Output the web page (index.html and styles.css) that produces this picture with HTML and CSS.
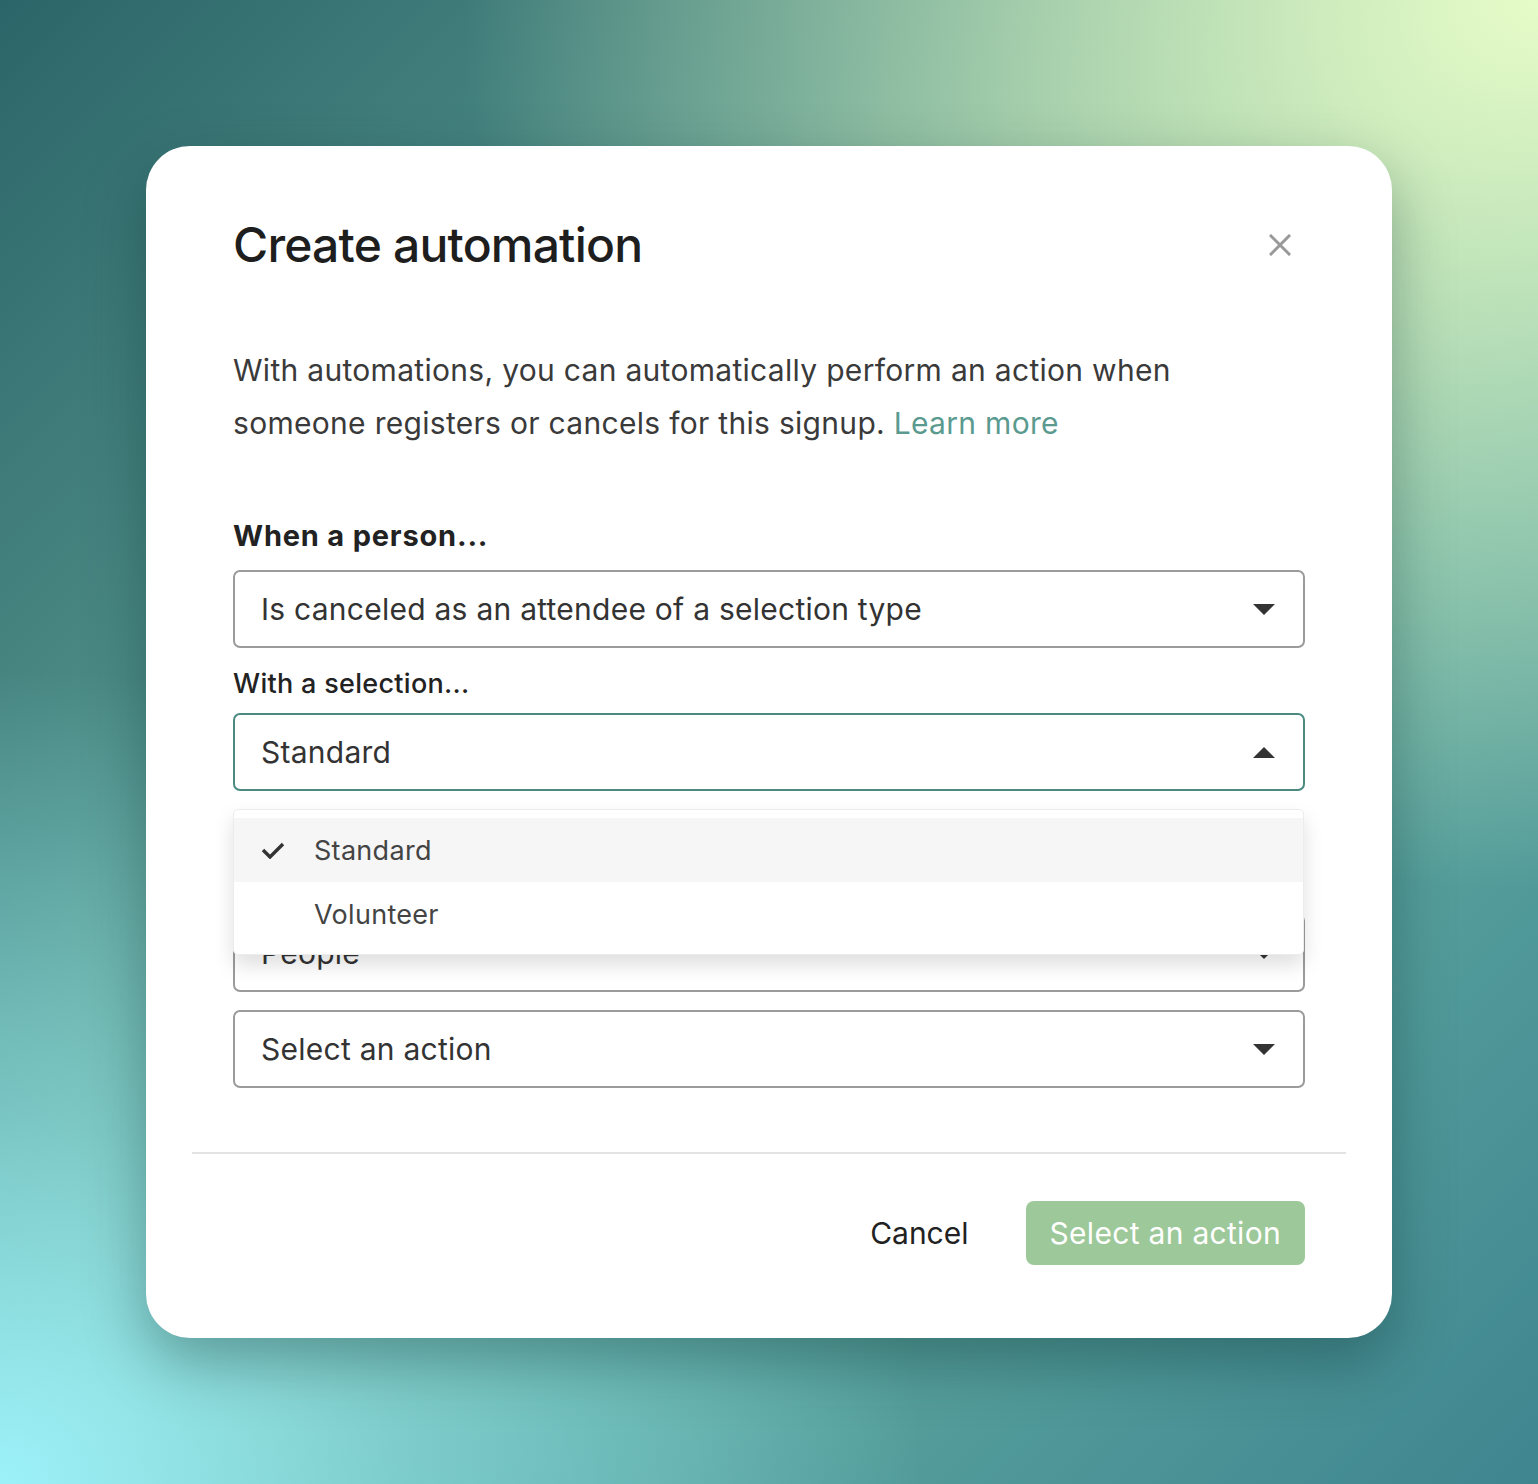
FILE: index.html
```html
<!DOCTYPE html>
<html lang="en">
<head>
  <meta charset="UTF-8" />
  <title>Create automation</title>
  <link rel="stylesheet" href="styles.css">
</head>
<body>

  <!-- Modal -->
  <div class="modal">
    <div class="modal-head">
      <h2 class="modal-title">Create automation</h2>
      <button class="close-btn" aria-label="Close">
        <svg width="22" height="22" viewBox="0 0 22 22">
          <path d="M2 2 L20 20 M20 2 L2 20" stroke="#999" stroke-width="3" stroke-linecap="square" fill="none"/>
        </svg>
      </button>
    </div>

    <p class="intro">
      With automations, you can automatically perform an action when
      someone registers or cancels for this signup. <a href="#" class="link">Learn more</a>
    </p>

    <div class="field field-first">
      <label class="label label-strong">When a person...</label>
      <div class="select">
        <span>Is canceled as an attendee of a selection type</span>
        <span class="caret"></span>
      </div>
    </div>

    <div class="field field-open">
      <label class="label">With a selection...</label>
      <div class="select select-active">
        <span>Standard</span>
        <span class="caret caret-up"></span>
      </div>

      <!-- Menu desplegable -->
      <ul class="menu">
        <li class="menu-item selected">
          <svg class="check" width="24" height="18" viewBox="0 0 24 18">
            <path d="M2 9 L9 16 L22 3" stroke="#333" stroke-width="3.4" fill="none"/>
          </svg>
          Standard
        </li>
        <li class="menu-item">Volunteer</li>
      </ul>
    </div>

    <div class="field field-then">
      <label class="label">Then...</label>
      <div class="select">
        <span>People</span>
        <span class="caret"></span>
      </div>
    </div>

    <div class="field">
      <div class="select">
        <span>Select an action</span>
        <span class="caret"></span>
      </div>
    </div>

    <hr class="divider">

    <div class="modal-foot">
      <button class="btn-cancel">Cancel</button>
      <button class="btn-primary">Select an action</button>
    </div>
  </div>

</body>
</html>
```

FILE: styles.css
```css
body {
  font-family: Inter, "Noto Sans", sans-serif;
  margin: 0;
  min-height: 100vh;
  display: flex;
  justify-content: center;
  align-items: center;
  background:
    radial-gradient(ellipse 70% 60% at 100% 0%, #e6fcc8 0%, rgba(220, 245, 195, 0.6) 45%, rgba(200, 235, 190, 0) 100%),
    radial-gradient(ellipse 60% 55% at 0% 100%, #9cf1f9 0%, rgba(140, 225, 232, 0.6) 45%, rgba(120, 210, 215, 0) 100%),
    linear-gradient(135deg, #2c6569 0%, #4f8f88 30%, #7ab598 50%, #5fa9a0 65%, #3e8590 100%);
}
.modal {
  background: white;
  width: 1246px;
  box-sizing: border-box;
  padding: 70px 87px 73px 87px;
  border-radius: 44px;
  box-shadow: 0 24px 60px rgba(0, 40, 40, 0.35);
  color: #222;
}
.modal-head {
  display: flex;
  justify-content: space-between;
  align-items: center;
}
.modal-title {
  margin: 0;
  font-size: 48px;
  line-height: 58px;
  font-weight: 500;
  color: #1e1e1e;
  letter-spacing: -0.8px;
}
.close-btn {
  background: none;
  border: none;
  padding: 0;
  margin-right: 14px;
  width: 22px;
  height: 22px;
  display: flex;
}
.intro {
  margin: 70px 0 0;
  max-width: 980px;
  font-size: 30px;
  line-height: 53px;
  color: #3a3a3a;
  letter-spacing: 0.3px;
}
.link {
  color: #5a9a8f;
  text-decoration: none;
}
.field {
  margin-top: 18px;
}
.field-first {
  margin-top: 66px;
}
.label {
  display: block;
  font-size: 27px;
  line-height: 36px;
  font-weight: 500;
  color: #222;
  margin-bottom: 11px;
  letter-spacing: 0.3px;
}
.label-strong {
  font-size: 29px;
  line-height: 40px;
  font-weight: 700;
  margin-bottom: 14px;
  letter-spacing: 0.8px;
}
.select {
  height: 78px;
  box-sizing: border-box;
  border: 2px solid #9b9b9b;
  border-radius: 7px;
  padding: 0 28px 0 26px;
  display: flex;
  align-items: center;
  justify-content: space-between;
  font-size: 30px;
  color: #333;
  letter-spacing: 0.25px;
}
.select-active {
  border-color: #4a8a80;
}
.caret {
  width: 0;
  height: 0;
  border-left: 11px solid transparent;
  border-right: 11px solid transparent;
  border-top: 11px solid #333;
}
.caret-up {
  border-top: none;
  border-bottom: 11px solid #333;
}
.field-open {
  position: relative;
}
.menu {
  position: absolute;
  left: 0;
  right: 1px;
  top: calc(100% + 18px);
  z-index: 2;
  margin: 0;
  padding: 8px 0;
  list-style: none;
  background: #fff;
  border: 1px solid #ececec;
  border-radius: 5px;
  box-shadow: 0 10px 20px rgba(0, 0, 0, 0.13);
}
.menu-item {
  height: 64px;
  display: flex;
  align-items: center;
  padding-left: 80px;
  position: relative;
  font-size: 27px;
  color: #444;
  letter-spacing: 0.3px;
}
.menu-item.selected {
  background: #f6f6f6;
}
.check {
  position: absolute;
  left: 27px;
  top: 23px;
}
.field-then {
  margin-top: 76px;
}
.divider {
  border: none;
  border-top: 2px solid #e3e3e3;
  margin: 64px -41px 0;
}
.modal-foot {
  display: flex;
  justify-content: flex-end;
  align-items: center;
  margin-top: 47px;
  gap: 33px;
}
.btn-cancel {
  background: none;
  border: none;
  font-family: inherit;
  font-size: 30px;
  color: #222;
  padding: 0 24px;
  height: 64px;
}
.btn-primary {
  background: #9dc899;
  border: none;
  border-radius: 8px;
  font-family: inherit;
  font-size: 30px;
  color: #fff;
  padding: 0 24px;
  height: 64px;
  letter-spacing: 0.3px;
}
```
